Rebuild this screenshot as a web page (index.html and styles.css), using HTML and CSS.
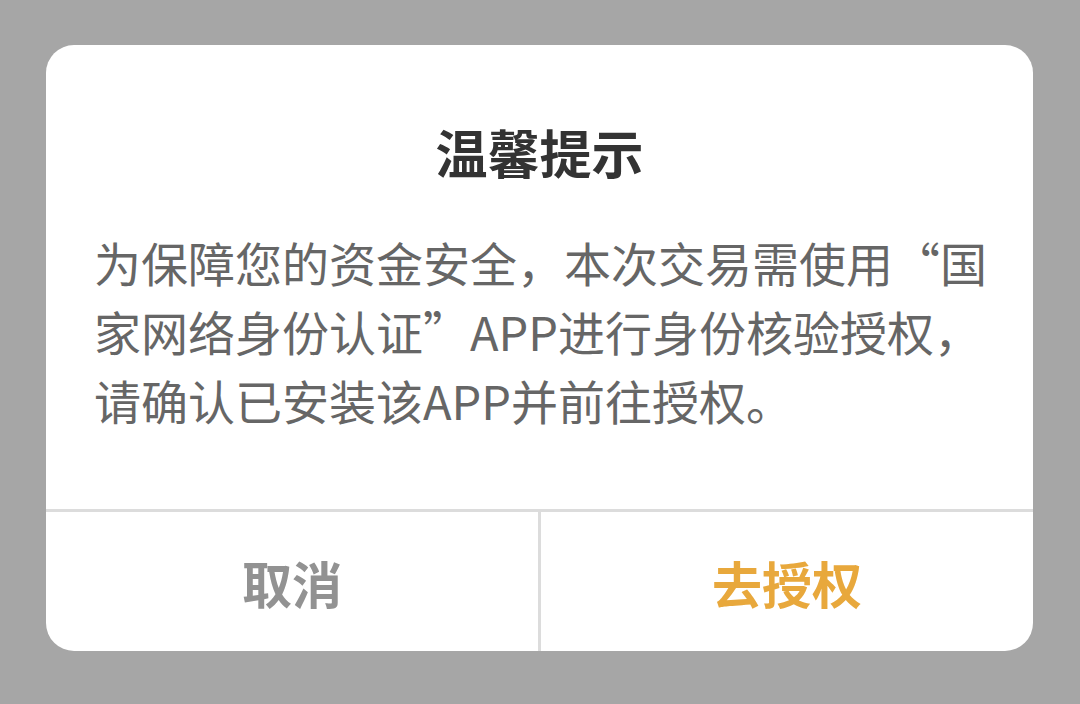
FILE: index.html
```html
<!DOCTYPE html>
<html lang="zh-CN">
<head>
<meta charset="utf-8">
<link rel="stylesheet" href="styles.css">
</head>
<body>
<div class="dialog">
  <div class="title">温馨提示</div>
  <div class="content">为保障您的资金安全，本次交易需使用“国<br>家网络身份认证”APP进行身份核验授权，<br>请确认已安装该APP并前往授权。</div>
  <div class="footer">
    <div class="btn cancel">取消</div>
    <div class="sep"></div>
    <div class="btn confirm">去授权</div>
  </div>
</div>
</body>
</html>
```
FILE: styles.css
```css
html, body {
  margin: 0;
  padding: 0;
  background: #a6a6a6;
  width: 1080px;
  height: 704px;
  overflow: hidden;
}
body {
  padding: 45px 0 0 46px;
  box-sizing: border-box;
  font-family: "Noto Sans CJK SC", "Noto Sans", sans-serif;
}
.dialog {
  width: 987px;
  height: 606px;
  background: #fff;
  border-radius: 28px;
  display: flex;
  flex-direction: column;
  overflow: hidden;
}
.title {
  margin-top: 72px;
  height: 70px;
  line-height: 70px;
  text-align: center;
  font-size: 52px;
  font-weight: 700;
  color: #333;
}
.content {
  margin-top: 40px;
  padding: 0 46px 0 48px;
  font-size: 47px;
  line-height: 69px;
  color: #666;
  white-space: nowrap;
}
.footer {
  margin-top: auto;
  height: 142px;
  border-top: 3px solid #dcdcdc;
  box-sizing: border-box;
  display: flex;
}
.btn {
  flex: 1;
  display: flex;
  align-items: center;
  justify-content: center;
  font-size: 50px;
  font-weight: 700;
}
.sep {
  width: 3px;
  background: #dcdcdc;
}
.cancel {
  color: #929292;
}
.confirm {
  color: #e8a83c;
}
```
